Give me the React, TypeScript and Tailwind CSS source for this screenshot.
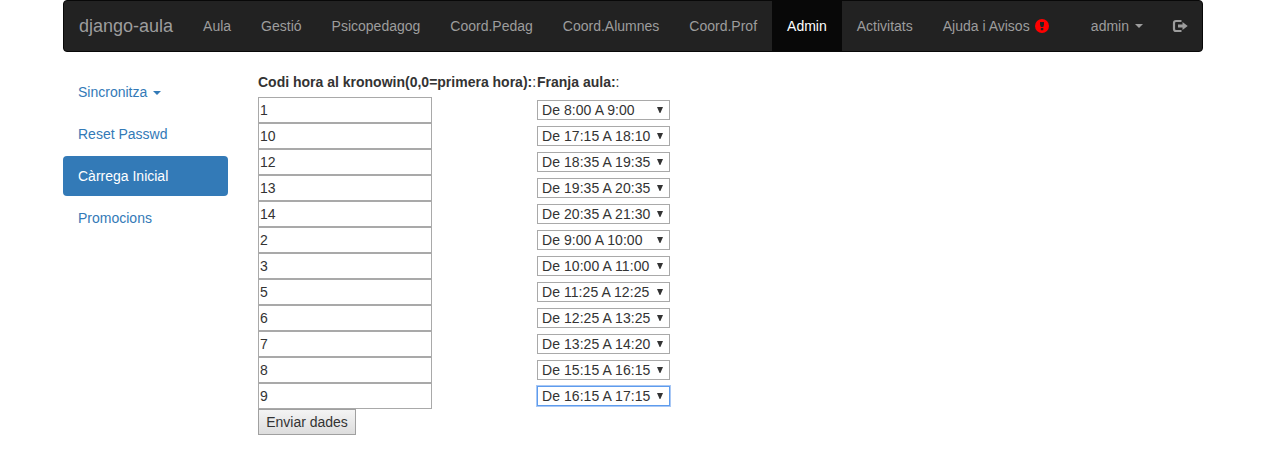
const navItems = [
  'Aula',
  'Gestió',
  'Psicopedagog',
  'Coord.Pedag',
  'Coord.Alumnes',
  'Coord.Prof',
  'Admin',
  'Activitats',
];

const rows = [
  { code: '1', slot: 'De 8:00 A 9:00' },
  { code: '10', slot: 'De 17:15 A 18:10' },
  { code: '12', slot: 'De 18:35 A 19:35' },
  { code: '13', slot: 'De 19:35 A 20:35' },
  { code: '14', slot: 'De 20:35 A 21:30' },
  { code: '2', slot: 'De 9:00 A 10:00' },
  { code: '3', slot: 'De 10:00 A 11:00' },
  { code: '5', slot: 'De 11:25 A 12:25' },
  { code: '6', slot: 'De 12:25 A 13:25' },
  { code: '7', slot: 'De 13:25 A 14:20' },
  { code: '8', slot: 'De 15:15 A 16:15' },
  { code: '9', slot: 'De 16:15 A 17:15' },
];

function Caret() {
  return (
    <span className="ml-[6px] inline-block border-x-4 border-t-4 border-x-transparent border-t-current align-middle" />
  );
}

function AlertIcon() {
  return (
    <svg className="ml-[5px] h-[14px] w-[14px]" viewBox="0 0 14 14" aria-hidden="true">
      <circle cx="7" cy="7" r="7" fill="#ff0000" />
      <path d="M5 3h4v2.5L8.3 8H5.8L5 5.5zM5.8 9h2.5v2.3H5.8z" fill="#222" />
    </svg>
  );
}

function LogoutIcon() {
  return (
    <svg className="h-[14px] w-[16px]" viewBox="0 0 16 14" aria-hidden="true">
      <path
        d="M9.5 2H4Q2 2 2 4v6q0 2 2 2h5.5"
        fill="none"
        stroke="#9d9d9d"
        strokeWidth="2.2"
      />
      <path d="M6 5.5h4.5V3L15.7 7l-5.2 4V8.5H6z" fill="#9d9d9d" />
    </svg>
  );
}

function Navbar() {
  return (
    <nav className="flex h-[52px] rounded border border-[#080808] bg-[#222] text-[#9d9d9d]">
      <a className="flex items-center px-[15px] text-[18px]">django-aula</a>
      {navItems.map((item) => (
        <a
          key={item}
          className={
            item === 'Admin'
              ? 'flex items-center bg-[#080808] px-[15px] text-white'
              : 'flex items-center px-[15px]'
          }
        >
          {item}
        </a>
      ))}
      <a className="flex items-center px-[15px]">
        Ajuda i Avisos
        <AlertIcon />
      </a>
      <div className="ml-auto flex">
        <a className="flex items-center px-[15px]">
          admin
          <Caret />
        </a>
        <a className="flex items-center px-[14px]">
          <LogoutIcon />
        </a>
      </div>
    </nav>
  );
}

function Sidebar() {
  return (
    <aside className="flex w-[165px] flex-col gap-0.5 text-[#337ab7]">
      <a className="px-[15px] py-[10px]">
        Sincronitza
        <Caret />
      </a>
      <a className="px-[15px] py-[10px]">Reset Passwd</a>
      <a className="rounded bg-[#337ab7] px-[15px] py-[10px] text-white">Càrrega Inicial</a>
      <a className="px-[15px] py-[10px]">Promocions</a>
    </aside>
  );
}

function SlotSelect({ value, focused }: { value: string; focused: boolean }) {
  return (
    <div className="grid w-[133px] grid-cols-1 grid-rows-1 items-center">
      <select
        className={
          focused
            ? 'col-start-1 row-start-1 h-5 w-full appearance-none border border-[#5e9ced] bg-white pl-1 leading-4 tracking-[0.06px] outline-1 outline-[#a9c8f5]'
            : 'col-start-1 row-start-1 h-5 w-full appearance-none border border-[#a9a9a9] bg-white pl-1 leading-4 tracking-[0.06px]'
        }
        defaultValue={value}
      >
        <option>{value}</option>
      </select>
      <svg
        className="pointer-events-none col-start-1 row-start-1 mr-[7px] h-[6px] w-[6px] justify-self-end"
        viewBox="0 0 6 6"
        aria-hidden="true"
      >
        <path d="M0 0h6L3.4 6h-.8z" fill="#333" />
      </svg>
    </div>
  );
}

function HoursForm() {
  return (
    <form className="flex flex-col items-start">
      <div className="grid h-[25px] grid-cols-[279px_auto] whitespace-nowrap">
        <div>
          <b>Codi hora al kronowin(0,0=primera hora):</b>:
        </div>
        <div>
          <b>Franja aula:</b>:
        </div>
      </div>
      {rows.map((row, i) => (
        <div key={row.code} className="grid h-[26px] grid-cols-[279px_auto] items-center">
          <input
            className="h-[26px] w-[174px] border border-[#a9a9a9] bg-white px-px"
            defaultValue={row.code}
          />
          <SlotSelect value={row.slot} focused={i === rows.length - 1} />
        </div>
      ))}
      <button
        type="button"
        className="h-[26px] w-[98px] border border-[#a0a0a0] bg-linear-to-b from-[#f4f4f4] to-[#dddddd]"
      >
        Enviar dades
      </button>
    </form>
  );
}

export default function App() {
  return (
    <div className="h-[460px] bg-white pl-[63px] font-['Liberation_Sans',Arial,sans-serif] text-[14px] leading-5 text-[#333]">
      <div className="w-[1140px]">
        <Navbar />
        <div className="flex gap-[30px] pt-5">
          <Sidebar />
          <HoursForm />
        </div>
      </div>
    </div>
  );
}
